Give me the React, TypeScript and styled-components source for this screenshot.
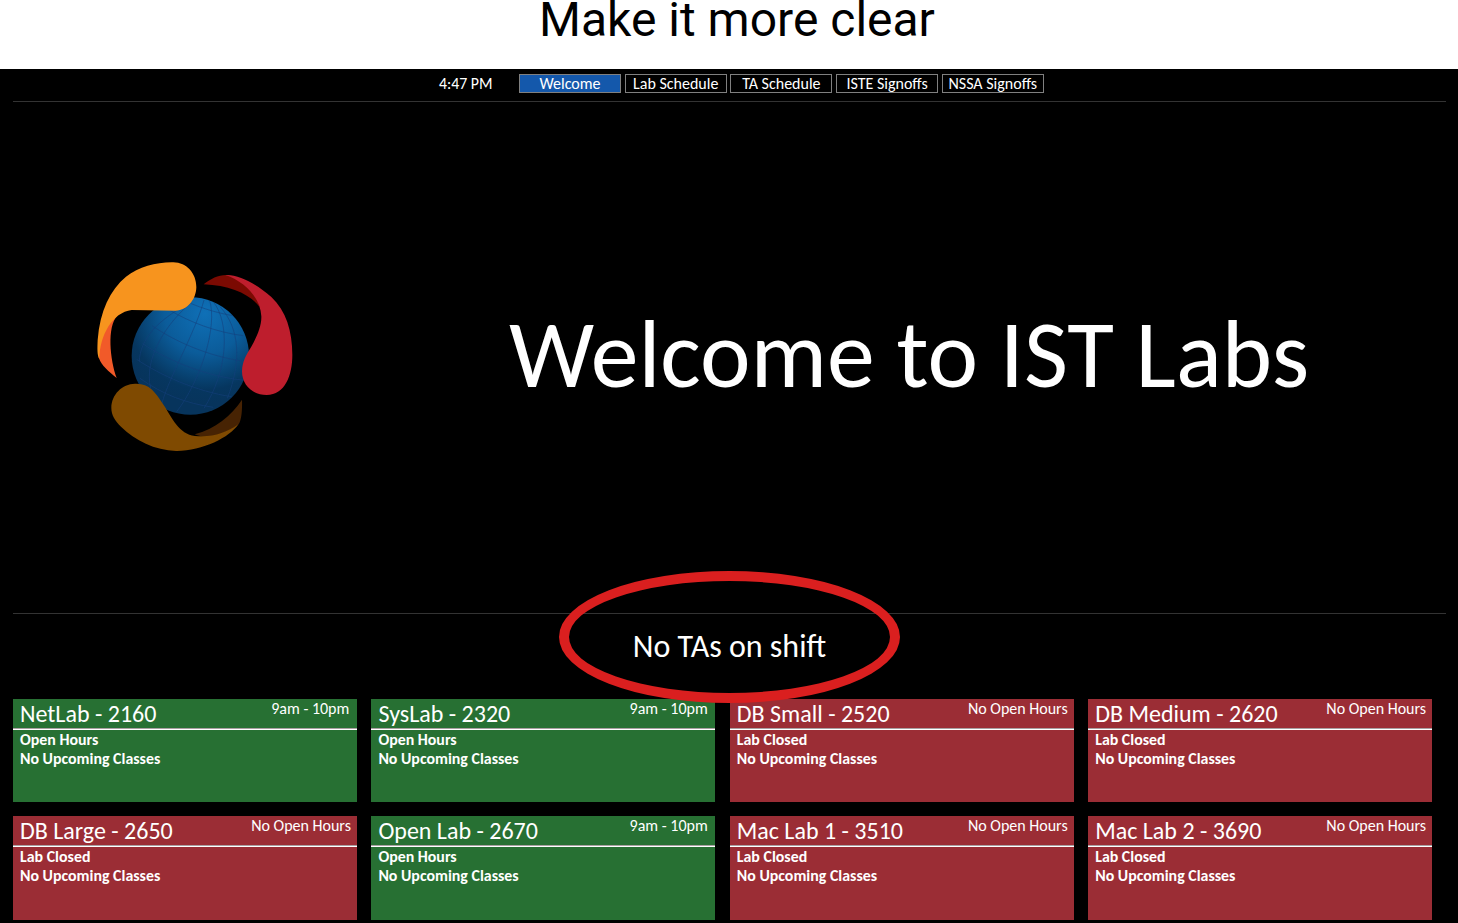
import React from "react";
import styled, { createGlobalStyle } from "styled-components";

const GlobalStyle = createGlobalStyle`
  * { box-sizing: border-box; }
  body { margin: 0; background: #fff; }
`;

const Page = styled.div`
  width: 1458px;
  height: 923px;
  overflow: hidden;
  display: flex;
  flex-direction: column;
`;

const Caption = styled.h1`
  margin: 0;
  height: 69px;
  padding-left: 16px;
  font: 400 48px/40px Roboto, sans-serif;
  color: #000;
  text-align: center;
  white-space: nowrap;
`;

const Board = styled.main`
  flex: 1;
  padding: 0 12px 0 13px;
  background: #000;
  color: #fff;
  font-family: Calibri, Carlito, Lato, sans-serif;
  white-space: nowrap;
`;

const TopBar = styled.nav`
  height: 33px;
  padding: 5px 0 0 426px;
  display: flex;
  align-items: flex-start;
  border-bottom: 1px solid #333;
`;

const Clock = styled.span`
  width: 80px;
  font-size: 15.8px;
  line-height: 20px;
`;

const Tab = styled.span<{ $active?: boolean }>`
  width: 102px;
  height: 19px;
  margin-right: 3.7px;
  border: 1px solid #808080;
  background: ${(p) => (p.$active ? "#1458ab" : "transparent")};
  font-size: 16px;
  line-height: 18px;
  text-align: center;
`;

const Hero = styled.section`
  height: 512px;
  display: flex;
  border-bottom: 1px solid #333;
`;

const Logo = styled.svg`
  flex: none;
  width: 230px;
  height: 220px;
  margin: 143px 0 0 67px;
`;

const Title = styled.h2`
  margin: 203px 0 0 199px;
  font-size: 95.8px;
  font-weight: 400;
  line-height: 100px;
`;

const Shift = styled.section`
  height: 85px;
  position: relative;
  font-size: 32px;
  line-height: 66px;
  text-align: center;
`;

const Marker = styled.div`
  position: absolute;
  z-index: 1;
  left: 546px;
  top: -43px;
  width: 341px;
  height: 132px;
  border: 10px solid #da1f1f;
  border-radius: 50%;
`;

const Grid = styled.section`
  display: grid;
  grid-template-columns: repeat(4, 344.1px);
  grid-auto-rows: 103.4px;
  gap: 13.8px 14.3px;
`;

const Card = styled.article<{ $open: boolean }>`
  background: ${(p) => (p.$open ? "#277033" : "#9b2d35")};
`;

const CardHead = styled.header`
  height: 31px;
  padding: 0 6px 0 7px;
  display: flex;
  justify-content: space-between;
  border-bottom: 1px solid #fff;
  box-shadow: inset 0 -1px #a9a0a2;
`;

const LabName = styled.span`
  font-size: 24px;
  line-height: 29px;
`;

const Hours = styled.span<{ $open: boolean }>`
  padding-right: ${(p) => (p.$open ? 1.8 : 0.2)}px;
  font-size: 16px;
  line-height: 20px;
`;

const Status = styled.p`
  margin: 0;
  padding: 0 7px;
  font-size: 15.9px;
  font-weight: 700;
  line-height: 19px;
`;

const tabs = ["Welcome", "Lab Schedule", "TA Schedule", "ISTE Signoffs", "NSSA Signoffs"];

const labs = [
  { name: "NetLab - 2160", open: true },
  { name: "SysLab - 2320", open: true },
  { name: "DB Small - 2520", open: false },
  { name: "DB Medium - 2620", open: false },
  { name: "DB Large - 2650", open: false },
  { name: "Open Lab - 2670", open: true },
  { name: "Mac Lab 1 - 3510", open: false },
  { name: "Mac Lab 2 - 3690", open: false },
];

function GlobeLogo() {
  return (
    <Logo viewBox="0 0 690 660">
      <defs>
        <radialGradient id="globe" gradientUnits="userSpaceOnUse" cx="375" cy="205" r="270">
          <stop offset="0" stopColor="#0f70b7" />
          <stop offset="0.45" stopColor="#0b5c9a" />
          <stop offset="0.85" stopColor="#06365f" />
          <stop offset="1" stopColor="#07345c" />
        </radialGradient>
        <clipPath id="disc">
          <circle cx="331" cy="333" r="176" />
        </clipPath>
      </defs>
      <circle cx="331" cy="333" r="176" fill="url(#globe)" />
      <g clipPath="url(#disc)" fill="none" stroke="#153f7c" strokeOpacity="0.55" strokeWidth="3">
        <path d="M268 195C330 232 410 262 490 272" />
        <path d="M216 242C300 300 410 340 502 350" />
        <path d="M188 296C260 345 380 395 494 406" />
        <path d="M170 343C240 390 350 440 455 455" />
        <path d="M180 400C250 450 320 475 400 487" />
        <path d="M320 170C370 192 420 206 465 213" />
        <path d="M300 190C235 230 180 280 178 350" />
        <path d="M330 176C260 235 190 340 212 430" />
        <path d="M372 165C345 265 265 400 246 475" />
        <path d="M388 163C415 245 360 410 290 500" />
        <path d="M400 170C450 235 445 375 372 490" />
        <path d="M420 185C480 250 485 350 442 460" />
      </g>
      <path fill="#f15a29" d="M112 212C80 245 90 345 110 399C85 379 65 362 57 340C52 290 75 235 112 212Z" />
      <path
        fill="#f7941e"
        d="M280 52C320 53 349 84 349 127C348 163 323 196 287 197L155 195C97 202 59 272 58 342C51 330 52 310 53 285C60 198 90 135 138 95C178 65 230 51 280 52Z"
      />
      <path fill="#7b0a02" d="M371 118C393 101 413 90 439 90C490 94 528 130 538 185C510 148 450 121 371 118Z" />
      <path
        fill="#be1e2d"
        d="M436 90C480 88 531 119 574 156C618 198 637 257 637 330C637 391 615 450 560 450C517 450 486 420 486 379C487 348 499 330 513 307C530 276 545 244 544 214C541 158 495 110 436 90Z"
      />
      <path fill="#472303" d="M486 464C455 511 405 552 344 568C390 588 450 560 476 538C485 524 487 495 486 464Z" />
      <path
        fill="#7f4a01"
        d="M165 416C207 414 225 440 251 480C275 517 297 568 345 573C397 578 438 564 475 538C450 577 365 619 288 618C225 615 165 587 123 545C105 527 94 510 94 488C95 448 126 417 165 416Z"
      />
    </Logo>
  );
}

export default function App() {
  return (
    <Page>
      <GlobalStyle />
      <Caption>Make it more clear</Caption>
      <Board>
        <TopBar>
          <Clock>4:47 PM</Clock>
          {tabs.map((tab, i) => (
            <Tab key={tab} $active={i === 0}>
              {tab}
            </Tab>
          ))}
        </TopBar>
        <Hero>
          <GlobeLogo />
          <Title>Welcome to IST Labs</Title>
        </Hero>
        <Shift>
          No TAs on shift
          <Marker />
        </Shift>
        <Grid>
          {labs.map((lab) => (
            <Card key={lab.name} $open={lab.open}>
              <CardHead>
                <LabName>{lab.name}</LabName>
                <Hours $open={lab.open}>{lab.open ? "9am - 10pm" : "No Open Hours"}</Hours>
              </CardHead>
              <Status>
                {lab.open ? "Open Hours" : "Lab Closed"}
                <br />
                No Upcoming Classes
              </Status>
            </Card>
          ))}
        </Grid>
      </Board>
    </Page>
  );
}
